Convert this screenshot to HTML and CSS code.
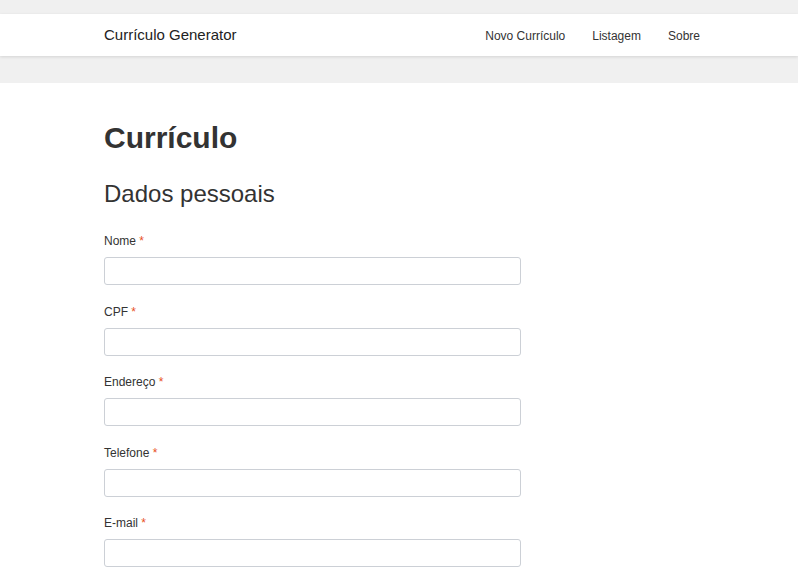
FILE: index.html
```html
<!DOCTYPE html>
<html lang="pt-BR">
<head>
<meta charset="utf-8">
<title>Currículo Generator</title>
<link rel="stylesheet" href="styles.css">
</head>
<body>
<header class="top">
  <nav class="navbar">
    <div class="container nav-inner">
      <a class="brand" href="#">Currículo Generator</a>
      <ul class="nav-links">
        <li><a href="#">Novo Currículo</a></li>
        <li><a href="#">Listagem</a></li>
        <li><a href="#">Sobre</a></li>
      </ul>
    </div>
  </nav>
</header>
<main class="content">
  <div class="container">
    <h1 class="title">Currículo</h1>
    <h2 class="subtitle">Dados pessoais</h2>
    <form class="form">
      <div class="group"><label>Nome <span class="req">*</span></label><input type="text"></div>
      <div class="group"><label>CPF <span class="req">*</span></label><input type="text"></div>
      <div class="group"><label>Endereço <span class="req">*</span></label><input type="text"></div>
      <div class="group"><label>Telefone <span class="req">*</span></label><input type="text"></div>
      <div class="group"><label>E-mail <span class="req">*</span></label><input type="text"></div>
    </form>
  </div>
</main>
</body>
</html>
```
FILE: styles.css
```css
* { box-sizing: border-box; }
html, body { margin: 0; padding: 0; }
body {
  font-family: "Liberation Sans", Arial, sans-serif;
  color: #333;
  background: #fff;
}
.container {
  width: 596px;
  margin-left: 104px;
}
.top {
  background: #f0f0f0;
  padding: 14px 0 27px;
}
.navbar {
  background: #fff;
  height: 42px;
  box-shadow: 0 1px 3px rgba(0,0,0,0.12);
}
.nav-inner {
  display: flex;
  align-items: center;
  justify-content: space-between;
  height: 41px;
}
.brand {
  font-size: 15px;
  color: #222;
  text-decoration: none;
}
.nav-links {
  list-style: none;
  margin: 0;
  padding: 0;
  display: flex;
  gap: 27px;
}
.nav-links a {
  font-size: 12px;
  color: #333;
  text-decoration: none;
}
.content {
  padding-top: 37px;
}
.title {
  font-size: 30px;
  font-weight: bold;
  margin: 0;
  line-height: 36px;
}
.subtitle {
  font-size: 24px;
  font-weight: normal;
  margin: 24px 0 0;
  line-height: 28px;
}
.form {
  margin-top: 24px;
  width: 417px;
}
.group {
  margin-bottom: 17.5px;
}
.group label {
  display: block;
  font-size: 12px;
  line-height: 18px;
  margin-bottom: 7px;
}
.req { color: #e8501e; }
.group input {
  display: block;
  width: 100%;
  height: 28px;
  border: 1px solid #ccd0d6;
  border-radius: 3px;
  background: #fff;
  padding: 4px 8px;
  font-size: 13px;
}
```
